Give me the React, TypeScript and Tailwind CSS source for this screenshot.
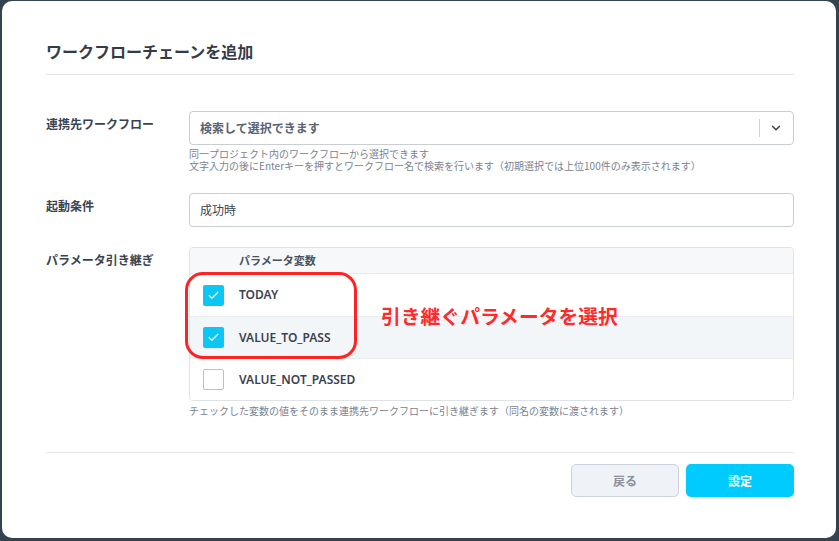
import { ChevronDown, Check } from 'lucide-react'

interface ParamRow {
  name: string
  checked: boolean
  shaded?: boolean
}

const params: ParamRow[] = [
  { name: 'TODAY', checked: true },
  { name: 'VALUE_TO_PASS', checked: true, shaded: true },
  { name: 'VALUE_NOT_PASSED', checked: false },
]

const font = { fontFamily: '"Noto Sans CJK JP", "Noto Sans", sans-serif' }

function Checkbox({ checked }: { checked: boolean }) {
  return checked ? (
    <div className="w-[21px] h-[21px] rounded-[2px] bg-[#0cc6f4] flex items-center justify-center">
      <Check className="w-[13px] h-[13px] text-white" strokeWidth={2.2} />
    </div>
  ) : (
    <div className="w-[21px] h-[21px] rounded-[2px] bg-white border border-[#b9bfca]" />
  )
}

export default function App() {
  return (
    <div className="w-full h-[541px] bg-[#34444e] pt-[1px] pl-[2px]" style={font}>
      <div className="relative w-[834px] h-[537px] bg-white rounded-[10px] pl-[44px] pr-[42px] pt-[39px]">
        <h1 className="text-[16px] leading-[22px] font-bold text-[#343b47]">ワークフローチェーンを追加</h1>
        <div className="mt-[12px] border-t border-[#e3e7ec]" />

        {/* 連携先 */}
        <div className="mt-[36px] flex">
          <div className="w-[143px] pt-[5px] text-[12px] leading-[16px] font-bold text-[#3c4350]">連携先ワークフロー</div>
          <div className="flex-1">
            <div className="h-[34px] border border-[#c9cdd4] rounded-[4px] flex items-center pl-[10px] pr-[10px]">
              <span className="flex-1 text-[12px] font-semibold text-[#5b6270]">検索して選択できます</span>
              <div className="w-px h-[18px] bg-[#cfd3d9] mr-[9px]" />
              <ChevronDown className="w-[14px] h-[14px] text-[#3c4350]" strokeWidth={2.6} />
            </div>
            <div className="mt-[3px] text-[10px] leading-[12px] text-[#7b8391]">
              <p>同一プロジェクト内のワークフローから選択できます</p>
              <p>文字入力の後にEnterキーを押すとワークフロー名で検索を行います（初期選択では上位100件のみ表示されます）</p>
            </div>
          </div>
        </div>

        {/* 起動条件 */}
        <div className="mt-[21px] flex">
          <div className="w-[143px] pt-[5px] text-[12px] leading-[16px] font-bold text-[#3c4350]">起動条件</div>
          <div className="flex-1 h-[34px] border border-[#c9cdd4] rounded-[4px] flex items-center pl-[10px] text-[12px] text-[#3c4350]">
            成功時
          </div>
        </div>

        {/* パラメータ */}
        <div className="mt-[20px] flex">
          <div className="w-[143px] pt-[5px] text-[12px] leading-[16px] font-bold text-[#3c4350]">パラメータ引き継ぎ</div>
          <div className="flex-1">
            <div className="border border-[#dfe3e8] rounded-[4px] overflow-hidden">
              <div className="h-[26px] bg-[#f7f8fa] flex items-center pl-[49px] text-[11px] font-bold text-[#4a5160] border-b border-[#e6e9ed]">
                パラメータ変数
              </div>
              {params.map((p, i) => (
                <div
                  key={p.name}
                  className={`h-[42px] flex items-center pl-[13px] ${p.shaded ? 'bg-[#f3f6f9]' : 'bg-white'} ${i > 0 ? 'border-t border-[#e9ecf0]' : ''}`}
                >
                  <Checkbox checked={p.checked} />
                  <span className="ml-[15px] text-[12px] font-semibold text-[#3b4351]" style={{ fontFamily: '"Noto Sans", sans-serif' }}>{p.name}</span>
                </div>
              ))}
            </div>
            <p className="mt-[4px] text-[10px] leading-[12px] text-[#7b8391]">
              チェックした変数の値をそのまま連携先ワークフローに引き継ぎます（同名の変数に渡されます）
            </p>
          </div>
        </div>

        <div className="mt-[35px] border-t border-[#e3e7ec]" />

        <div className="mt-[11px] flex justify-end gap-[7px]">
          <button className="w-[108px] h-[33px] rounded-[5px] bg-[#eff2f6] border border-[#cdd3dc] text-[12px] font-bold text-[#8a909c]">
            戻る
          </button>
          <button className="w-[108px] h-[33px] rounded-[5px] bg-[#00cbff] text-[12px] font-bold text-white">
            設定
          </button>
        </div>

        {/* annotation */}
        <div className="absolute left-[183px] top-[271px] w-[172px] h-[87px] border-[3.5px] border-[#ff2424] rounded-[18px]" />
        <div className="absolute left-[379px] top-[301px] text-[19.8px] leading-[28px] font-bold text-[#ff2a2a]">
          引き継ぐパラメータを選択
        </div>
      </div>
    </div>
  )
}
